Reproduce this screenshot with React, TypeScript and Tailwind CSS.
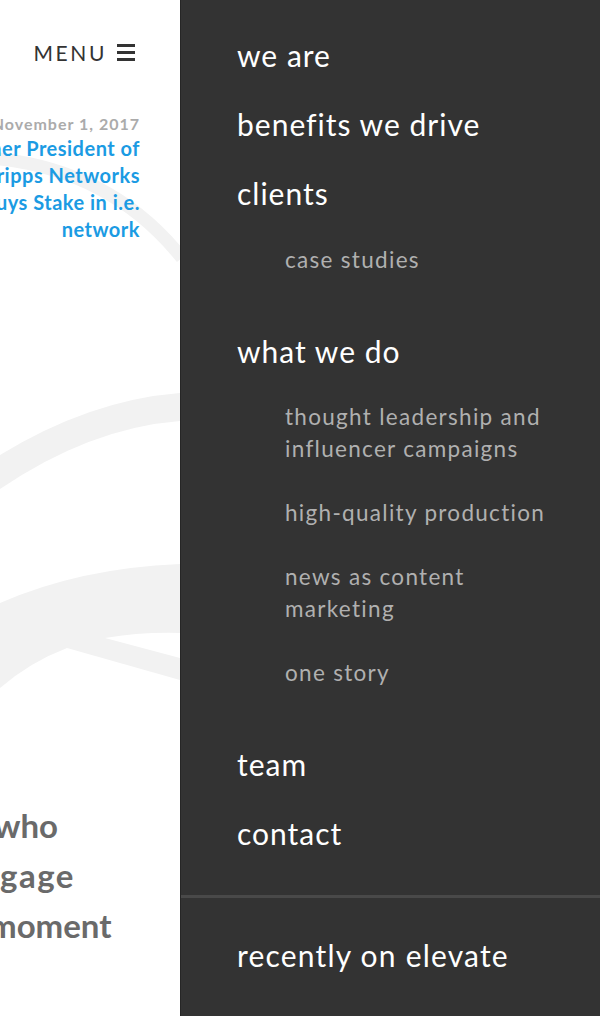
import { ReactNode } from 'react';

const font = { fontFamily: 'Lato, "Open Sans", sans-serif' };

function MainItem({ children }: { children: ReactNode }) {
  return <li className="py-[16.5px] text-[30px] leading-[36px] tracking-[1px] text-white">{children}</li>;
}

function SubItem({ children }: { children: ReactNode }) {
  return <li className="py-[16px] text-[22.5px] leading-[32px] text-[#b0b0b0] tracking-[1.3px]">{children}</li>;
}

function Watermark() {
  // faint arcs of the logo behind the page
  return (
    <svg className="absolute inset-0 pointer-events-none" width="180" height="1016" viewBox="0 0 180 1016">
      <path d="M-10,158 Q110,168 182,258" fill="none" stroke="#f2f2f2" strokeWidth="13" />
      <path d="M0,455 Q90,400 180,393 L180,421 Q90,428 0,489 Z" fill="#f2f2f2" />
      <path d="M0,603 Q80,568 180,564 L180,633 Q140,632 105,638 L180,658 L180,680 L67,648 Q30,662 0,688 Z" fill="#f2f2f2" />
    </svg>
  );
}

export default function App() {
  return (
    <div className="flex w-[600px] h-[1016px] overflow-hidden bg-white" style={font}>
      <div className="relative w-[180px] shrink-0 overflow-hidden">
        <Watermark />
        <div className="relative flex flex-col h-full">
          <div className="flex items-center justify-end gap-[10px] pr-[45px] pt-[41px] h-[64px]">
            <span className="text-[21px] leading-none tracking-[2.6px] text-[#333]">MENU</span>
            <div className="flex flex-col gap-[4px] w-[18px]">
              <span className="h-[3px] bg-[#333]" />
              <span className="h-[3px] bg-[#333]" />
              <span className="h-[3px] bg-[#333]" />
            </div>
          </div>
          <div className="flex flex-col items-end pr-[40px] pt-[49px] whitespace-nowrap font-bold">
            <span className="text-[16px] leading-[22px] tracking-[1px] text-[#ababab]">November 1, 2017</span>
            <span className="text-[20px] leading-[27px] tracking-[0.5px] text-[#1b9be3]">Former President of</span>
            <span className="text-[20px] leading-[27px] tracking-[0.5px] text-[#1b9be3]">Scripps Networks</span>
            <span className="text-[20px] leading-[27px] tracking-[0.5px] text-[#1b9be3]">Buys Stake in i.e.</span>
            <span className="text-[20px] leading-[27px] tracking-[0.5px] text-[#1b9be3]">network</span>
          </div>
          <div className="mt-auto mb-[66px] flex flex-col whitespace-nowrap font-bold text-[33px] leading-[50px] text-[#6a6a6a]">
            <span className="-ml-[6px]">who</span>
            <span className="tracking-[1.5px]">gage</span>
            <span className="-ml-[11px]">moment</span>
          </div>
        </div>
      </div>

      <nav className="flex-1 bg-[#333333] border-l border-[#262626]">
        <ul className="pl-[56px] pt-[20.5px]">
          <MainItem>we are</MainItem>
          <MainItem>benefits we drive</MainItem>
          <MainItem>clients</MainItem>
          <li>
            <ul className="pl-[48px] mb-[24.5px]">
              <SubItem>case studies</SubItem>
            </ul>
          </li>
          <MainItem>what we do</MainItem>
          <li>
            <ul className="pl-[48px] mb-[24px]">
              <SubItem>
                thought leadership and
                <br />
                influencer campaigns
              </SubItem>
              <SubItem>high-quality production</SubItem>
              <SubItem>
                news as content
                <br />
                marketing
              </SubItem>
              <SubItem>one story</SubItem>
            </ul>
          </li>
          <MainItem>team</MainItem>
          <MainItem>contact</MainItem>
        </ul>
        <div className="mt-[27.5px] h-[3px] bg-[#494949]" />
        <div className="pl-[56px] pt-[22.5px]">
          <div className="py-[16.5px] text-[30px] leading-[36px] tracking-[1.2px] text-white">recently on elevate</div>
        </div>
      </nav>
    </div>
  );
}
